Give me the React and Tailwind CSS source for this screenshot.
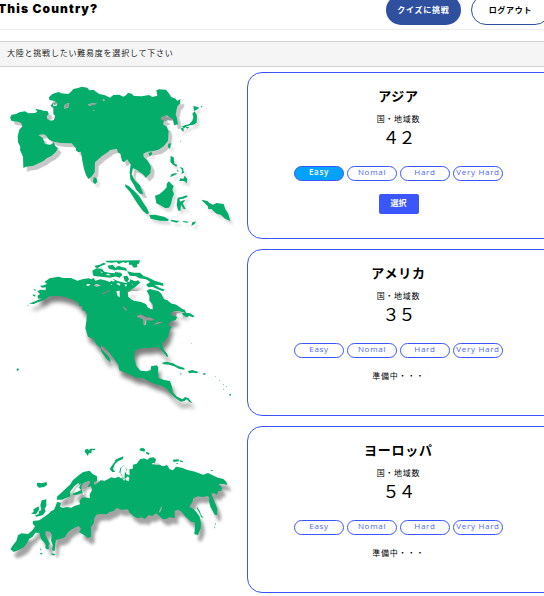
const LEVELS = ['Easy', 'Nomal', 'Hard', 'Very Hard'];

function AsiaMap() {
  return (
    <svg viewBox="0 -9 720 504" className="block h-[168px] w-[240px]">
      <g fill="#04ad6a">
        <path
          className="drop-shadow-[11px_12px_2px_rgba(0,0,0,0.22)]"
          fillRule="evenodd"
          d="M30 128L35 119L48 117L58 112L75 109L85 115L105 114L112 110L106 101L120 104L130 107L142 108L147 118L140 123L142 132L152 137L162 135L165 122L160 117L160 100L152 92L158 84L168 85L165 78L148 75L147 67L157 57L168 53L177 51L183 55L205 57L213 50L220 42L234 39L245 35L262 38L268 46L280 44L290 52L298 57L315 61L330 68L340 60L358 59L370 65L378 61L384 53L395 56L402 63L425 64L447 60L457 66L472 62L469 46L477 43L498 44L506 54L513 67L525 70L532 77L541 73L541 85L532 94L527 118L531 130L534 148L522 151L519 134L508 127L500 121L490 125L493 132L503 135L492 139L489 148L501 156L506 170L505 181L504 197L491 214L475 224L459 228L442 230L430 236L431 246L444 258L453 276L451 295L437 308L431 299L420 292L410 284L399 280L395 298L404 316L419 329L430 357L420 356L409 345L401 329L391 313L389 291L392 268L381 253L372 262L366 258L361 236L355 233L350 221L330 225L325 230L305 244L285 262L284 292L274 305L265 312L258 300L252 282L247 258L243 230L235 232L227 226L228 220L215 205L182 204L162 200L148 194L137 181L130 178L115 180L128 189L135 207L148 209L155 208L161 202L166 213L173 220L168 230L155 242L140 250L130 258L100 272L78 275L70 279L69 245L60 225L61 215L54 202L53 184L58 164L67 154L64 145L55 140L35 138ZM193 90L203 84L208 85L204 98L193 101ZM264 88L280 84L291 86L278 90L268 93ZM160 83L172 83L170 92L160 94ZM308 73L315 74L314 77L309 78ZM276 105L285 105L282 107Z"
        />
        <path
          className="drop-shadow-[8px_11px_3px_rgba(0,0,0,0.14)]"
          d="M281 307L289 308L292 320L285 328L279 322ZM580 93L590 95L598 98L589 105L582 108ZM584 109L591 121L590 143L581 149L570 151L561 154L552 160L545 155L555 150L567 148L577 137L580 126L577 116ZM543 158L551 160L551 170L544 165ZM556 157L568 155L563 161ZM505 206L513 205L510 222L504 216ZM445 235L454 230L457 237L449 244ZM512 243L521 247L523 266L532 270L529 275L517 268L511 260ZM539 276L549 279L552 293L544 297L547 286ZM530 284L536 287L534 292ZM529 294L531 297L510 307L515 297ZM541 310L550 311L554 302L562 312L560 325L552 318L538 318ZM375 328L387 334L405 350L417 362L426 377L441 400L447 414L441 418L429 408L417 392L403 371L390 350L376 335ZM465 362L479 357L492 346L500 337L500 326L507 319L514 327L521 333L517 345L522 356L517 369L513 387L507 398L495 399L481 391L469 385ZM448 420L465 419L492 425L506 433L504 438L480 437L452 431ZM515 434L530 437L539 437L530 443L511 438ZM533 368L545 366L560 361L563 365L550 371L539 372L540 380L551 376L556 376L548 385L557 402L551 402L543 389L541 408L534 406L530 389ZM577 442L588 439L584 447L574 453ZM549 438L567 440L562 443L550 442ZM604 374L622 378L628 384L639 389L650 384L671 387L676 403L685 417L691 438L675 431L663 420L650 416L641 409L635 402L625 403L624 394L607 378ZM541 197L544 197L541 202ZM603 94L608 92L604 98Z"
        />
      </g>
      <path fill="#979797" d="M193 91L203 85L207 86L203 97L194 99ZM266 89L279 85L290 86L269 93ZM162 84L171 84L163 92ZM495 122L506 127L518 133L514 137L503 135L490 138L482 132L483 126Z" />
    </svg>
  );
}

function AmericaMap() {
  return (
    <svg viewBox="0 -3 720 504" className="block h-[168px] w-[240px]">
      <g fill="#04ad6a">
        <path
          className="drop-shadow-[7px_18px_6px_rgba(0,0,0,0.5)]"
          fillRule="evenodd"
          d="M133 96L149 85L175 80L190 84L213 84L232 92L250 87L267 85L274 88L281 84L286 92L301 88L315 91L329 96L341 88L355 94L377 99L390 94L398 105L407 97L419 99L406 111L391 120L382 125L384 139L398 151L423 154L440 162L451 178L459 178L459 165L448 151L449 139L440 122L449 117L464 121L475 123L484 131L492 148L502 151L515 161L530 165L547 177L554 179L559 190L549 187L534 182L523 183L510 190L519 197L532 200L527 210L515 213L507 219L505 226L516 231L509 239L505 258L495 273L486 280L490 298L502 313L505 322L499 319L486 302L478 294L462 291L447 295L428 294L412 298L404 306L403 326L409 348L421 362L440 364L452 360L453 349L470 346L475 352L474 365L475 383L490 389L510 393L516 410L518 427L531 440L548 448L555 441L565 444L577 460L568 456L560 448L553 453L542 455L526 444L512 430L500 416L483 407L464 401L450 395L433 387L422 384L408 383L385 371L358 361L355 345L343 328L328 308L311 287L309 292L331 328L331 337L319 326L305 306L302 294L290 284L280 267L264 260L256 235L259 214L261 194L256 184L247 180L247 169L237 168L236 160L222 151L195 141L172 137L148 139L137 147L122 154L109 158L102 162L87 161L114 150L128 145L114 146L113 137L120 132L112 124L121 119L137 121L138 112L126 113L120 107L132 106L141 101ZM366 167L374 172L382 181L374 178ZM410 197L423 193L440 202L449 201L464 209L457 212L440 210L437 226L431 225L431 209L419 202L412 202ZM460 224L473 215L488 216L483 220ZM288 102L303 106L291 111L281 107ZM304 131L330 119L327 125L310 132Z"
        />
        <path d="M277 62L290 55L306 56L313 65L332 69L350 70L357 76L343 80L329 83L304 80L281 78L278 70ZM284 47L299 44L311 38L319 42L303 48L293 54L287 53ZM318 32L420 31L417 41L411 42L412 51L401 53L395 44L388 45L386 36L375 39L370 36L356 42L349 36L336 38L319 37ZM322 47L338 44L346 53L356 47L365 51L377 53L382 63L371 61L355 59L350 65L340 59L328 57ZM345 66L363 68L367 75L359 83L345 79ZM370 79L382 77L387 88L382 97L374 93ZM381 64L401 68L420 68L430 77L446 83L464 92L489 100L491 108L478 105L463 104L478 113L494 119L489 124L473 118L458 111L445 112L438 104L451 96L438 88L418 85L408 79L389 77ZM390 88L405 94L415 91L421 99L401 105L390 98ZM102 118L108 119L106 122L100 120ZM99 133L107 136L103 140L98 136ZM80 168L86 164L87 166ZM49 359L54 354L57 359L52 363ZM485 338L500 335L519 340L532 347L553 354L553 359L536 356L523 349L507 344L491 343ZM564 363L577 360L596 366L590 370L578 368L567 370ZM539 370L546 371L543 374ZM609 370L617 370L616 374L610 374ZM543 190L555 188L570 190L584 199L578 202L567 197L562 202L553 198ZM518 162L528 164L520 167ZM645 378L648 379L646 381ZM658 390L661 392L658 394ZM669 402L672 403L670 406ZM669 416L672 417L670 420ZM678 407L681 409L679 411ZM688 432L693 432L692 438L688 436ZM573 280L576 280L575 282Z" />
      </g>
      <path fill="white" d="M307 50L321 48L318 52L308 54ZM344 60L355 59L354 64L347 65ZM382 54L393 56L385 60ZM300 64L308 67L306 70ZM318 72L326 71L332 76L322 76ZM334 88L346 92L338 95ZM350 98L361 101L360 107L351 103ZM373 103L382 104L377 110ZM332 102L337 104L334 106ZM262 102L272 103L266 108L258 106ZM349 124L359 122L359 142L353 138ZM384 127L397 122L410 124L421 121L435 128L445 140L446 153L453 161L456 176L444 173L438 162L421 155L402 152L385 140Z" />
      <path fill="#ececec" d="M384 139L398 133L410 138L404 148L396 149ZM530 190L546 190L550 202L538 207L529 199Z" />
      <path fill="#999" d="M410 197L423 194L440 203L450 203L463 210L447 211L442 209L435 211L436 224L432 223L428 207L412 202ZM461 224L473 216L487 216L474 221ZM368 168L378 176L381 183L374 179ZM303 285L313 298L329 315L342 332L336 330L318 311L304 297Z" />
    </svg>
  );
}

function EuropeMap() {
  return (
    <svg viewBox="0 -27 720 504" className="block h-[168px] w-[240px]">
      <g fill="#04ad6a">
        <path
          className="drop-shadow-[11px_19px_5px_rgba(0,0,0,0.36)]"
          fillRule="evenodd"
          d="M31 342L41 328L49 318L54 301L65 295L84 297L98 285L105 274L98 266L99 258L118 256L132 246L145 237L153 229L162 224L167 213L171 201L183 203L180 215L188 219L201 216L214 218L223 213L240 208L238 198L246 188L255 187L269 190L269 178L276 166L273 154L262 156L271 142L267 137L251 143L244 154L247 174L232 179L219 180L222 169L239 149L235 144L223 154L211 169L211 184L196 190L186 194L170 194L172 184L184 173L198 160L210 149L219 135L237 120L250 111L269 107L278 117L291 124L291 138L281 142L284 150L293 144L302 136L315 137L326 131L334 127L345 130L355 125L364 130L373 133L358 112L361 99L372 91L381 104L374 116L374 132L384 124L388 129L387 139L380 137L376 131L373 137L369 134L366 119L361 115L364 98L373 91L379 104L378 117L389 121L388 103L398 101L399 89L410 86L420 73L432 70L442 74L449 68L461 67L468 73L463 90L478 89L490 94L501 90L509 103L519 106L528 95L537 97L548 99L560 104L573 107L585 110L597 115L610 119L624 114L641 122L654 128L670 132L679 140L682 150L669 147L656 147L667 159L663 167L654 169L651 180L642 174L634 176L640 191L645 203L652 221L651 240L645 240L638 228L631 215L627 199L628 187L622 183L609 186L594 184L580 190L577 202L568 215L579 221L591 233L599 246L603 264L602 280L594 300L583 298L584 288L585 263L573 260L555 244L545 230L535 224L524 227L524 249L508 247L501 251L489 253L477 242L468 235L456 243L446 240L435 252L425 247L414 250L401 244L389 233L383 223L364 224L350 219L342 227L328 232L319 238L301 237L290 239L283 249L282 263L273 276L273 306L263 309L252 300L237 291L243 282L236 273L224 278L213 284L204 292L195 306L181 312L168 314L166 328L164 348L156 346L158 330L153 316L156 300L150 290L137 288L136 299L149 326L145 333L147 342L140 343L136 326L123 312L118 293L106 293L98 305L88 311L80 326L71 337L56 345L41 351Z"
        />
        <path d="M110 145L116 143L125 145L140 141L141 150L132 156L117 158L112 154ZM255 44L263 41L267 46L271 41L286 41L285 45L275 46L274 55L266 55L264 64L260 58L254 50ZM329 102L337 90L345 79L358 70L370 66L369 71L359 74L345 87L339 102L346 111L337 111ZM345 75L357 69L370 64L368 73L355 78L347 82ZM125 196L139 193L139 213L134 221L137 229L129 240L110 245L104 242L116 237L117 229L124 225L121 211ZM100 223L116 214L117 224L108 238L93 236L101 230ZM418 42L428 38L435 43L434 50L421 47ZM438 50L449 54L446 60L439 56ZM518 74L536 73L537 79L521 81ZM539 76L549 78L548 82L540 80ZM527 85L534 84L533 88ZM631 105L640 106L635 109ZM135 334L145 337L144 343L137 340ZM120 341L124 341L122 347ZM118 354L128 355L124 359ZM154 355L167 358L162 361L155 359ZM592 217L599 227L603 239L611 248L604 247L597 231L590 220ZM645 265L648 266L645 271ZM643 274L646 276L644 281ZM438 83L449 85L446 91L437 88Z" />
      </g>
      <path fill="white" d="M244 143L239 150L226 163L219 175L232 170L243 165L237 158ZM251 172L254 173L252 181L249 177ZM263 172L269 169L270 177L265 180ZM456 85L467 83L459 89Z" />
      <path fill="#b5b5b5" d="M200 193L216 184L224 186L213 198L203 207L205 198ZM475 235L483 217L486 214L483 227Z" />
    </svg>
  );
}

function LevelButton({ label, active }) {
  return (
    <button
      className={`flex h-[15px] w-[50px] items-center justify-center whitespace-nowrap rounded-full border border-[#3b55ff] pb-[3px] font-['Open_Sans',sans-serif] text-[8px] leading-none tracking-[0.7px] ${
        active ? 'bg-[#03a3fb] font-semibold text-white' : 'bg-white text-[#4b65ff]'
      }`}
    >
      {label}
    </button>
  );
}

function Continent({ name, count, Map, ready }) {
  return (
    <section className="flex h-[167px] w-[570px] shrink-0">
      <div className="w-[247px] shrink-0">
        <Map />
      </div>
      <div className="flex w-[323px] shrink-0 flex-col items-center rounded-[15px] border border-[#3b55ff] pr-[20px] pt-[14px]">
        <h2 className="h-[20px] text-[13px] font-bold leading-[18px] tracking-[0.75px]">{name}</h2>
        <p className="mt-[7px] h-[10px] text-[8px] leading-[10px] tracking-[0.75px]">国・地域数</p>
        <p className="mt-px h-[24px] text-[17px] leading-[24px] tracking-[-1px]">{count}</p>
        <div className="mt-[17px] flex h-[15px] gap-[3px]">
          {LEVELS.map((label, i) => (
            <LevelButton key={label} label={label} active={ready && i === 0} />
          ))}
        </div>
        {ready ? (
          <button className="mt-[13px] h-[20px] w-[40px] rounded-[2px] bg-[#3b55ff] pb-[3px] text-[8px] font-bold leading-none text-white">
            選択
          </button>
        ) : (
          <p className="mt-[12px] text-[8px] leading-[12px] tracking-[0.75px]">準備中・・・</p>
        )}
      </div>
    </section>
  );
}

export default function App() {
  return (
    <div className="h-[596px] w-[544px] overflow-hidden bg-white font-['Noto_Sans_CJK_JP',sans-serif] text-black">
      <header className="flex h-[30px] w-[550px] justify-between border-b border-[#eeeeee]">
        <h1 className="-ml-[2px] whitespace-nowrap font-['Inter',sans-serif] text-[12px] font-black leading-[18px] tracking-[1.1px]">
          This Country?
        </h1>
        <nav className="-mt-[5px] flex h-[30px] gap-[10px] text-[8px] font-bold tracking-[0.75px]">
          <button className="h-[30px] w-[75px] rounded-full bg-[#2f4f9f] text-white">クイズに挑戦</button>
          <button className="h-[30px] w-[79px] rounded-full border border-[#2f4f9f] bg-white">ログアウト</button>
        </nav>
      </header>
      <div className="mt-[11px] h-[26px] w-[550px] border-y border-[#d3d3d3] bg-[#f5f5f5] pl-[7px] text-[8px] leading-[21px] tracking-[0.78px] text-[#222]">
        大陸と挑戦したい難易度を選択して下さい
      </div>
      <main className="mt-[5px] flex flex-col gap-[10px]">
        <Continent name="アジア" count="４２" Map={AsiaMap} ready />
        <Continent name="アメリカ" count="３５" Map={AmericaMap} />
        <Continent name="ヨーロッパ" count="５４" Map={EuropeMap} />
      </main>
    </div>
  );
}
